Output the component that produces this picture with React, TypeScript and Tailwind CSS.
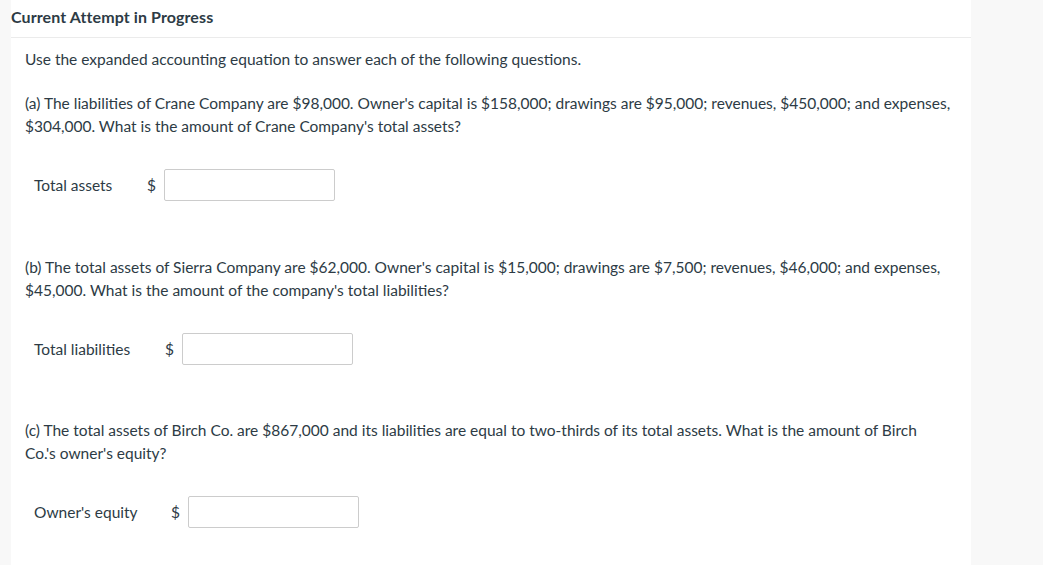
import React from "react";

function AnswerRow({ label, labelW }: { label: string; labelW: string }) {
  return (
    <div className="flex items-center pl-[9px]">
      <span className={`${labelW} text-[15.5px]`}>{label}</span>
      <span className="text-[15.5px] mr-[8px]">$</span>
      <input className="w-[171px] h-[32px] border border-[#cccccc] rounded-[2px] bg-white outline-none" />
    </div>
  );
}

export default function App() {
  return (
    <div
      className="flex w-[1043px] h-[565px] bg-[#f8f8f8] text-[#2d3b45]"
      style={{ fontFamily: "Lato, 'Noto Sans', sans-serif" }}
    >
      <div className="w-[11px] shrink-0" />
      <div className="w-[960px] bg-white shrink-0">
        <div className="h-[38px] pt-[7px] border-b border-[#ebebeb]">
          <h1 className="text-[16px] font-bold leading-[20px] tracking-[0.1px]">Current Attempt in Progress</h1>
        </div>
        <div className="pl-[14px] pr-[10px] text-[15.5px] leading-[23px]">
          <p className="mt-[10px]">Use the expanded accounting equation to answer each of the following questions.</p>
          <p className="mt-[21px]">
            (a) The liabilities of Crane Company are $98,000. Owner's capital is $158,000; drawings are $95,000; revenues, $450,000; and expenses, $304,000. What is the amount of Crane Company's total assets?
          </p>
          <div className="mt-[31px]">
            <AnswerRow label="Total assets" labelW="w-[113px]" />
          </div>
          <p className="mt-[55px]">
            (b) The total assets of Sierra Company are $62,000. Owner's capital is $15,000; drawings are $7,500; revenues, $46,000; and expenses, $45,000. What is the amount of the company's total liabilities?
          </p>
          <div className="mt-[31px]">
            <AnswerRow label="Total liabilities" labelW="w-[131px]" />
          </div>
          <p className="mt-[54px]">
            (c) The total assets of Birch Co. are $867,000 and its liabilities are equal to two-thirds of its total assets. What is the amount of Birch
            <br />
            Co.'s owner's equity?
          </p>
          <div className="mt-[31px]">
            <AnswerRow label="Owner's equity" labelW="w-[137px]" />
          </div>
        </div>
      </div>
      <div className="flex-1" />
    </div>
  );
}
